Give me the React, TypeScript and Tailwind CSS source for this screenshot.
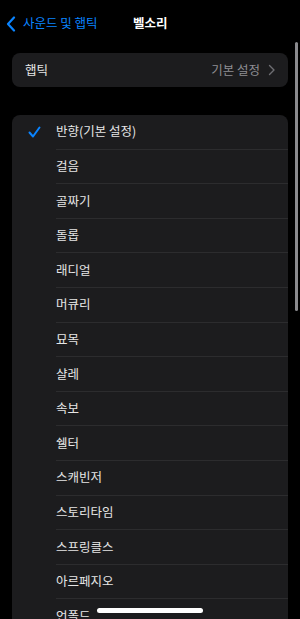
import React from "react";

const tones = [
  "반향(기본 설정)",
  "걸음",
  "골짜기",
  "돌롭",
  "래디얼",
  "머큐리",
  "묘목",
  "샬레",
  "속보",
  "쉘터",
  "스캐빈저",
  "스토리타임",
  "스프링클스",
  "아르페지오",
  "언폴드",
];

const font = { fontFamily: '"Noto Sans CJK KR", "Noto Sans", sans-serif' };

const App: React.FC = () => {
  return (
    <div
      className="relative w-[300px] h-[619px] overflow-hidden bg-black text-[#e6e6e6]"
      style={font}
    >
      {/* nav bar */}
      <div className="relative flex items-center h-[44px] pt-[3px] pl-[6px]">
        <svg width="10" height="16" viewBox="0 0 10 16">
          <path
            d="M8 1.5 L2 8 L8 14.5"
            fill="none"
            stroke="#0a84ff"
            strokeWidth="2.2"
            strokeLinecap="round"
            strokeLinejoin="round"
          />
        </svg>
        <span className="ml-[7px] text-[12.5px] text-[#0a84ff]">사운드 및 햅틱</span>
        <span className="absolute left-[133px] top-[14px] text-[12.5px] font-semibold text-white">
          벨소리
        </span>
      </div>

      {/* haptic card */}
      <div className="mx-[12px] mt-[9px] h-[34px] rounded-[8px] bg-[#1c1c1e] flex items-center pl-[13px] pr-[12px]">
        <span className="text-[12.5px]">햅틱</span>
        <span className="ml-auto text-[12.5px] text-[#8e8e93]">기본 설정</span>
        <svg width="8" height="12" viewBox="0 0 8 12" className="ml-[8px]">
          <path
            d="M1.5 1.5 L6 6 L1.5 10.5"
            fill="none"
            stroke="#6e6e73"
            strokeWidth="1.4"
            strokeLinecap="round"
            strokeLinejoin="round"
          />
        </svg>
      </div>

      {/* ringtone list */}
      <div className="mx-[12px] mt-[28px] rounded-t-[8px] bg-[#1c1c1e]">
        {tones.map((t, i) => (
          <div key={t} className="flex h-[34.6px]">
            <div className="w-[44px] flex items-center pl-[16px]">
              {i === 0 && (
                <svg width="13" height="12" viewBox="0 0 13 12">
                  <path
                    d="M1.5 6.5 L5 10.5 L11.5 1.5"
                    fill="none"
                    stroke="#0a84ff"
                    strokeWidth="2"
                    strokeLinecap="round"
                    strokeLinejoin="round"
                  />
                </svg>
              )}
            </div>
            <div
              className={
                i < tones.length - 1
                  ? "flex-1 flex items-center border-b border-[#2c2c2e] text-[12.5px]"
                  : "flex-1 flex items-center text-[12.5px]"
              }
            >
              {t}
            </div>
          </div>
        ))}
      </div>

      {/* scroll indicator */}
      <div className="absolute left-[295px] top-[42px] w-[3px] h-[269px] rounded-full bg-[#8a8a8e]" />

      {/* home indicator */}
      <div className="absolute left-[97px] top-[608px] w-[106px] h-[5px] rounded-full bg-white" />
    </div>
  );
};

export default App;
